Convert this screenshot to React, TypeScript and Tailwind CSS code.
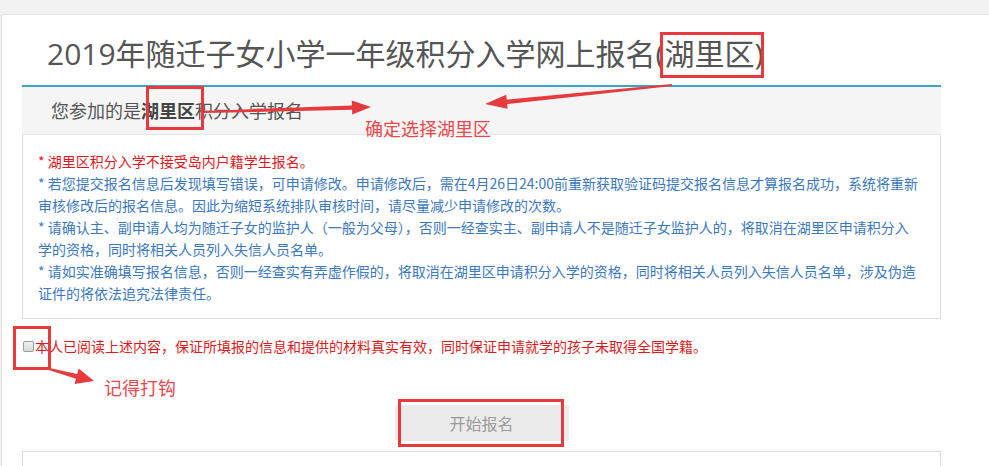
const titleFont = { fontFamily: '"Open Sans", "Noto Sans CJK SC", sans-serif' };
const bodyFont = { fontFamily: '"Noto Sans CJK SC", sans-serif' };

type Pt = [number, number];

// tapered arrow polygon: thin tail, wider near head, triangular head
function arrow(tail: Pt, tip: Pt, w0: number, w1: number, headLen: number, headHalf: number) {
  const dx = tip[0] - tail[0];
  const dy = tip[1] - tail[1];
  const len = Math.hypot(dx, dy);
  const ux = dx / len;
  const uy = dy / len;
  const nx = -uy;
  const ny = ux;
  const bx = tip[0] - ux * headLen;
  const by = tip[1] - uy * headLen;
  const pts: Pt[] = [
    [tail[0] + nx * w0, tail[1] + ny * w0],
    [bx + nx * w1, by + ny * w1],
    [bx + nx * headHalf, by + ny * headHalf],
    tip,
    [bx - nx * headHalf, by - ny * headHalf],
    [bx - nx * w1, by - ny * w1],
    [tail[0] - nx * w0, tail[1] - ny * w0],
  ];
  return pts.map((p) => `${p[0].toFixed(1)},${p[1].toFixed(1)}`).join(' ');
}

const notes = [
  { lines: ['* 湖里区积分入学不接受岛内户籍学生报名。'], red: true },
  {
    lines: [
      '* 若您提交报名信息后发现填写错误，可申请修改。申请修改后，需在4月26日24:00前重新获取验证码提交报名信息才算报名成功，系统将重新',
      '审核修改后的报名信息。因此为缩短系统排队审核时间，请尽量减少申请修改的次数。',
    ],
  },
  {
    lines: [
      '* 请确认主、副申请人均为随迁子女的监护人（一般为父母），否则一经查实主、副申请人不是随迁子女监护人的，将取消在湖里区申请积分入',
      '学的资格，同时将相关人员列入失信人员名单。',
    ],
  },
  {
    lines: [
      '* 请如实准确填写报名信息，否则一经查实有弄虚作假的，将取消在湖里区申请积分入学的资格，同时将相关人员列入失信人员名单，涉及伪造',
      '证件的将依法追究法律责任。',
    ],
  },
];

export default function App() {
  return (
    <div className="relative w-[989px] h-[466px] overflow-hidden bg-[#f2f2f2] pt-[14px] pl-[1px]" style={bodyFont}>
      <div className="bg-white border-t border-l border-[#e2e2e2] h-[460px] pt-[16px]">
        <div className="ml-[20px] w-[919px]">
          <h1 className="pl-[25px] text-[30px] leading-[46px] text-[#555] font-normal whitespace-nowrap" style={titleFont}>
            2019年随迁子女小学一年级积分入学网上报名(湖里区)
          </h1>
          <div className="mt-[8px] h-[2px] bg-[#3aa6c6]" />
          <div className="h-[48px] bg-[#f5f5f5] pl-[29px] text-[18px] leading-[46px] text-[#555] border-b border-[#e6e6e6]">
            您参加的是<b className="font-bold text-[#444]">湖里区</b>积分入学报名
          </div>
          <div className="border border-t-0 border-[#dcdcdc] px-[15px] pt-[15px] pb-[14px] text-[14px] leading-[22px] text-[#3b78c0] whitespace-nowrap">
            {notes.map((n, i) => (
              <p key={i} className={n.red ? 'text-[#e3161c]' : ''}>
                {n.lines.map((l, j) => (
                  <span key={j} className="block">
                    {l}
                  </span>
                ))}
              </p>
            ))}
          </div>
          <label className="mt-[16px] flex items-center h-[22px] text-[14px] text-[#dc1a20] whitespace-nowrap">
            <span className="ml-[1px] mr-[1px] w-[11px] h-[11px] rounded-[2px] border border-[#9c9c9c] bg-gradient-to-b from-[#f2f2f2] to-[#d8d8d8]" />
            本人已阅读上述内容，保证所填报的信息和提供的材料真实有效，同时保证申请就学的孩子未取得全国学籍。
          </label>
          <div className="mt-[48px] flex justify-center">
            <button className="w-[174px] h-[36px] rounded-[3px] bg-[#ebebeb] text-[16px] text-[#9a9a9a]">开始报名</button>
          </div>
          <div className="mt-[10px] h-[40px] border border-[#dcdcdc] shadow-[0_-1px_3px_rgba(0,0,0,0.06)]" />
        </div>
      </div>

      {/* annotations drawn over the page */}
      <div className="absolute left-[660px] top-[32px] w-[104px] h-[46px] border-[3px] border-[#e63a3e]" />
      <div className="absolute left-[146px] top-[86px] w-[58px] h-[44px] border-[3px] border-[#e63a3e]" />
      <div className="absolute left-[13px] top-[326px] w-[38px] h-[44px] border-[3px] border-[#e63a3e]" />
      <div className="absolute left-[398px] top-[399px] w-[166px] h-[48px] border-[3px] border-[#e63a3e]" />
      <div className="absolute left-[365px] top-[115px] text-[18px] leading-[26px] text-[#e8484c] whitespace-nowrap">确定选择湖里区</div>
      <div className="absolute left-[104px] top-[374px] text-[18px] leading-[26px] text-[#e8484c] whitespace-nowrap">记得打钩</div>
      <svg className="absolute left-0 top-0" width="989" height="466" viewBox="0 0 989 466">
        <polygon points={arrow([204, 112], [371, 107], 1, 2.2, 19, 7)} fill="#e63a3e" />
        <polygon points={arrow([672, 85], [485, 104], 1, 2.2, 22, 7)} fill="#e63a3e" />
        <polygon points={arrow([49, 369], [94, 381], 1, 2.5, 18, 8)} fill="#e63a3e" />
      </svg>
    </div>
  );
}
